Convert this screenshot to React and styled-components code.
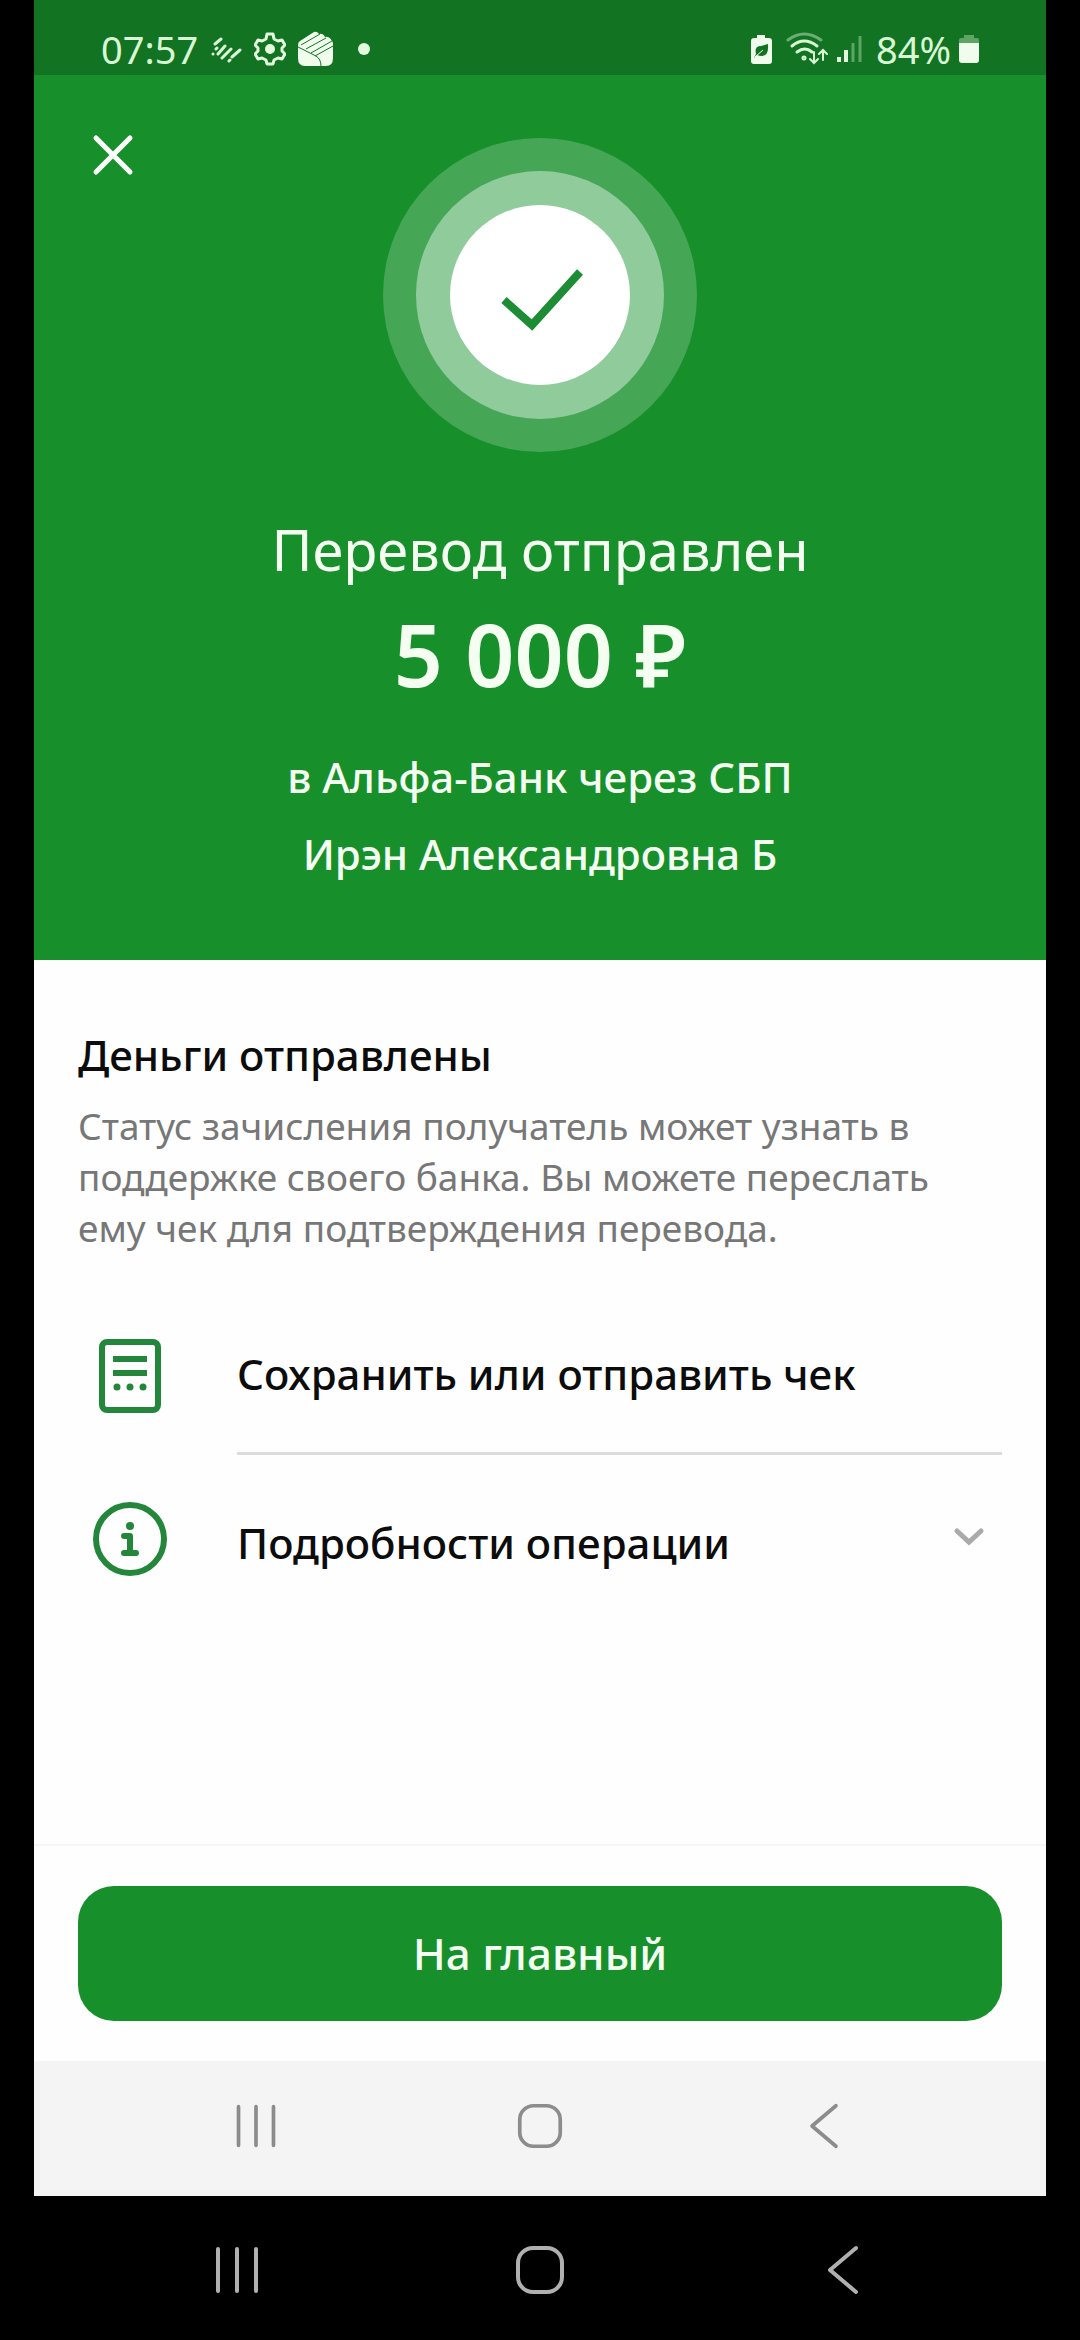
// Transfer receipt screen

import React from 'react';
import styled, { createGlobalStyle } from 'styled-components';

const green = '#178f2b';

// Used by both the app's navigation bar and the device's own one
const NavButtons = ({ size }) => (
    <>
        <NavButton type="button" aria-label="Недавние">
            <svg width={size} height={size} viewBox="0 0 50 50">
                <path d="M6 4v42M25 4v42M44 4v42" stroke="currentColor" strokeWidth="4" strokeLinecap="round" />
            </svg>
        </NavButton>
        <NavButton type="button" aria-label="Домой">
            <svg width={size} height={size} viewBox="0 0 50 50">
                <rect x="3" y="3" width="44" height="44" rx="15" fill="none" stroke="currentColor" strokeWidth="4" />
            </svg>
        </NavButton>
        <NavButton type="button" aria-label="Назад">
            <svg width={size} height={size} viewBox="0 0 50 50">
                <path d="M38 3L12 25L38 47" fill="none" stroke="currentColor" strokeWidth="4" strokeLinecap="round" strokeLinejoin="round" />
            </svg>
        </NavButton>
    </>
);

const Status = () => (
    <StatusBar>
        <StatusGroup $gap={12}>
            <StatusText>07:57</StatusText>
            {/* Diagonal dashes */}
            <svg width="32" height="32" viewBox="0 0 32 32" fill="none" stroke="#d9f7d5" strokeWidth="3" strokeLinecap="round">
                <path d="M5 11L11 6M6 16l1-1M3 21h0M8 21L15 13M12 25L21 16M19 28l1-1M22 24L30 17" />
            </svg>
            {/* Settings */}
            <svg width="32" height="34" viewBox="0 0 32 34">
                <path
                    d="M13 2h6l1 5 4 2 4-1 3 5-3 3v3l3 3-3 5-4-1-4 2-1 4h-6l-1-4-4-2-4 1-3-5 3-3v-3l-3-3 3-5 4 1 4-2z"
                    fill="none" stroke="#e3fadf" strokeWidth="3" strokeLinejoin="round"
                />
                <circle cx="16" cy="17" r="5" fill="#e3fadf" />
            </svg>
            {/* Folded stripes */}
            <svg width="36" height="36" viewBox="0 0 36 36">
                <path d="M0 14q0-3 2-4L16 1q3-1 5 2 4-1 6 3 4-1 7 4 1 1 1 3v14q0 8-7 8H7q-7 0-7-8z" fill="#f0fdec" />
                <path d="M3 14L22 3M8 18L28 7M13 22L34 10M0 16l18 9q5 3 5 10M17 25l18-10" fill="none" stroke="#127323" strokeWidth="1" />
            </svg>
            <Dot />
        </StatusGroup>
        <StatusGroup $gap={8}>
            {/* Power saving battery */}
            <svg width="28" height="32" viewBox="0 0 28 32">
                <path d="M7 2h8v3h4q3 0 3 3v20q0 3-3 3H4q-3 0-3-3V8q0-3 3-3h3z" fill="#f0fdec" />
                <path d="M6 21q-2-8 5-8l7-2q1 12-6 12-3 0-5-1l-3 3z" fill="#127323" />
                <path d="M5 24l8-7" stroke="#f0fdec" strokeWidth="1" />
            </svg>
            {/* Wi-Fi */}
            <svg width="42" height="34" viewBox="0 0 42 34" fill="none" stroke="#d9f7d5" strokeWidth="3" strokeLinecap="round">
                <path d="M2 8q16-12 33 0" opacity=".45" />
                <path d="M6 14q12-10 25 0M11 20q8-6 15 0" />
                <circle cx="18" cy="26" r="1" />
                <path d="M28 20v10M24 27l4 4 4-4M37 28V19M33 22l4-4 4 4" strokeWidth="2" />
            </svg>
            {/* Signal */}
            <svg width="32" height="30" viewBox="0 0 32 30">
                <path d="M3 23v5" stroke="#e3fadf" strokeWidth="4" />
                <path d="M10 16v12" stroke="#e3fadf" strokeWidth="4" />
                <path d="M17 9v19M24 2v26" stroke="#5da465" strokeWidth="3" />
            </svg>
            <StatusText>84%</StatusText>
            <svg width="20" height="30" viewBox="0 0 20 30">
                <path d="M5 1h10v3h3q2 0 2 2v4H0V6q0-2 2-2h3z" fill="#5da465" />
                <path d="M0 9h20v17q0 3-3 3H3q-3 0-3-3z" fill="#f0fdec" />
            </svg>
        </StatusGroup>
    </StatusBar>
);

const App = () => {
    return (
        <>
            <GlobalStyle />
            <Device>
                <Screen>
                    <Status />
                    <Header>
                        <HeaderTop>
                            <CloseButton type="button" aria-label="Закрыть">
                                <svg width="42" height="42" viewBox="0 0 42 42">
                                    <path d="M4 4l34 34M38 4L4 38" stroke="#fff" strokeWidth="5" strokeLinecap="round" />
                                </svg>
                            </CloseButton>
                            <svg width="322" height="322" viewBox="-4 -4 322 322" role="img" aria-label="Успешно">
                                <circle cx="157" cy="157" r="157" fill="#45a755" />
                                <circle cx="157" cy="157" r="124" fill="#90cb9b" />
                                <circle cx="157" cy="157" r="90" fill="#fff" />
                                <path d="M121 162L149 187L197 134" fill="none" stroke="#1c8c35" strokeWidth="8" />
                            </svg>
                        </HeaderTop>
                        <Title>Перевод отправлен</Title>
                        <Amount>5 000 ₽</Amount>
                        <Recipient>в Альфа-Банк через СБП</Recipient>
                        <Recipient>Ирэн Александровна Б</Recipient>
                    </Header>
                    <Content>
                        <Heading>Деньги отправлены</Heading>
                        <Note>
                            Статус зачисления получатель может узнать в поддержке своего банка. Вы можете переслать
                            ему чек для подтверждения перевода.
                        </Note>
                        <Row type="button">
                            <RowIcon>
                                <svg width="74" height="74" viewBox="0 0 74 74" fill="none" stroke="#23863a" strokeWidth="6">
                                    <rect x="9" y="3" width="56" height="68" rx="5" />
                                    <path d="M20 20h34M20 34h34" />
                                    <path d="M24 48h0M37 48h0M50 48h0" strokeWidth="7" strokeLinecap="round" />
                                </svg>
                            </RowIcon>
                            <RowBody $divided>
                                <RowLabel>Сохранить или отправить чек</RowLabel>
                            </RowBody>
                        </Row>
                        <Row type="button" aria-expanded="false">
                            <RowIcon>
                                <svg width="74" height="74" viewBox="0 0 74 74" fill="none" stroke="#23863a" strokeWidth="6">
                                    <circle cx="37" cy="37" r="34" />
                                    <circle cx="37" cy="24" r="4" fill="#23863a" stroke="none" />
                                    <path d="M31 34h6v17M31 51h12" strokeWidth="6" strokeLinecap="round" strokeLinejoin="round" />
                                </svg>
                            </RowIcon>
                            <RowBody>
                                <RowLabel>Подробности операции</RowLabel>
                                <svg width="36" height="36" viewBox="0 0 36 36">
                                    <path d="M6 6L18 17L30 6" fill="none" stroke="#aaa" strokeWidth="5" strokeLinecap="round" />
                                </svg>
                            </RowBody>
                        </Row>
                    </Content>
                    <Footer>
                        <MainButton type="button">На главный</MainButton>
                    </Footer>
                    <ScreenNav>
                        <NavButtons size={46} />
                    </ScreenNav>
                </Screen>
                <DeviceNav>
                    <NavButtons size={50} />
                </DeviceNav>
            </Device>
        </>
    )
}

// Styled Component
const GlobalStyle = createGlobalStyle`
    * {
        box-sizing: border-box;
        margin: 0;
        padding: 0;
    }
    body {
        background: #000;
        font-family: "Noto Sans", "Open Sans", sans-serif;
    }
    svg {
        display: block;
        flex-shrink: 0;
    }
    button {
        border: none;
        background: none;
        font-family: inherit;
        color: inherit;
        cursor: pointer;
    }
`;

const Device = styled.div`
    min-height: 100vh;
    display: flex;
    flex-direction: column;
`;

const Screen = styled.main`
    flex: 1;
    display: flex;
    flex-direction: column;
    margin: 0 34px;
    background: #fefefe;
`;

const StatusBar = styled.div`
    display: flex;
    justify-content: space-between;
    padding: 24px 67px 1px;
    background: #127323;
`;

const StatusGroup = styled.div`
    display: flex;
    align-items: center;
    gap: ${({ $gap }) => $gap}px;
    height: 50px;
`;

const StatusText = styled.span`
    font-size: 38px;
    line-height: 50px;
    color: #d9f7d5;
`;

const Dot = styled.span`
    width: 12px;
    height: 12px;
    margin-left: 12px;
    border-radius: 50%;
    background: #e3fadf;
`;

const Header = styled.header`
    padding: 59px 58px 68px;
    background: ${green};
    color: #f4fff2;
    text-align: center;
`;

const HeaderTop = styled.div`
    display: grid;
    grid-template-columns: 1fr auto 1fr;
    align-items: start;
    margin-bottom: 55px;
`;

const CloseButton = styled.button`
    justify-self: start;
`;

const Title = styled.h1`
    font-size: 56px;
    font-weight: 400;
    line-height: 76px;
    margin-bottom: 17px;
`;

const Amount = styled.p`
    font-size: 86px;
    font-weight: 600;
    line-height: 100px;
    margin-bottom: 34px;
`;

const Recipient = styled.p`
    font-size: 42px;
    font-weight: 500;
    line-height: 77px;
`;

const Content = styled.section`
    flex: 1;
    padding: 67px 44px 0;
`;

const Heading = styled.h2`
    font-size: 42px;
    font-weight: 500;
    line-height: 56px;
    margin-bottom: 17px;
    color: #0c0c0c;
`;

const Note = styled.p`
    padding-right: 44px;
    font-size: 37px;
    line-height: 51px;
    margin-bottom: 43px;
    color: #777;
`;

const Row = styled.button`
    display: flex;
    width: 100%;
    min-height: 159px;
    text-align: left;

    & + & {
        min-height: 168px;
    }
`;

const RowIcon = styled.span`
    display: flex;
    align-items: center;
    justify-content: center;
    align-self: stretch;
    width: 104px;
    margin-right: 55px;
`;

const RowBody = styled.span`
    flex: 1;
    display: flex;
    align-items: center;
    justify-content: space-between;
    align-self: stretch;
    padding: ${({ $divided }) => $divided ? '0' : '8px'} 15px 0 0;
    border-bottom: ${({ $divided }) => $divided ? '3px solid #dcdcdc' : 'none'};
`;

const RowLabel = styled.span`
    font-size: 42px;
    font-weight: 500;
    line-height: 56px;
    color: #0c0c0c;
`;

const Footer = styled.footer`
    padding: 40px 44px;
    border-top: 2px solid #f6f6f6;
`;

const MainButton = styled.button`
    width: 100%;
    padding: 38px;
    border-radius: 36px;
    background: ${green};
    color: #f4fff2;
    font-size: 44px;
    font-weight: 500;
    line-height: 59px;
`;

const Nav = styled.nav`
    display: grid;
    grid-template-columns: repeat(3, 1fr);
`;

const ScreenNav = styled(Nav)`
    padding: 0 80px 6px;
    height: 135px;
    background: #f4f4f4;
    color: #8c8c8c;
`;

const DeviceNav = styled(Nav)`
    padding: 4px 86px 0;
    height: 144px;
    color: #b0b0b0;
`;

const NavButton = styled.button`
    display: flex;
    align-items: center;
    justify-content: center;
`;

export default App;
